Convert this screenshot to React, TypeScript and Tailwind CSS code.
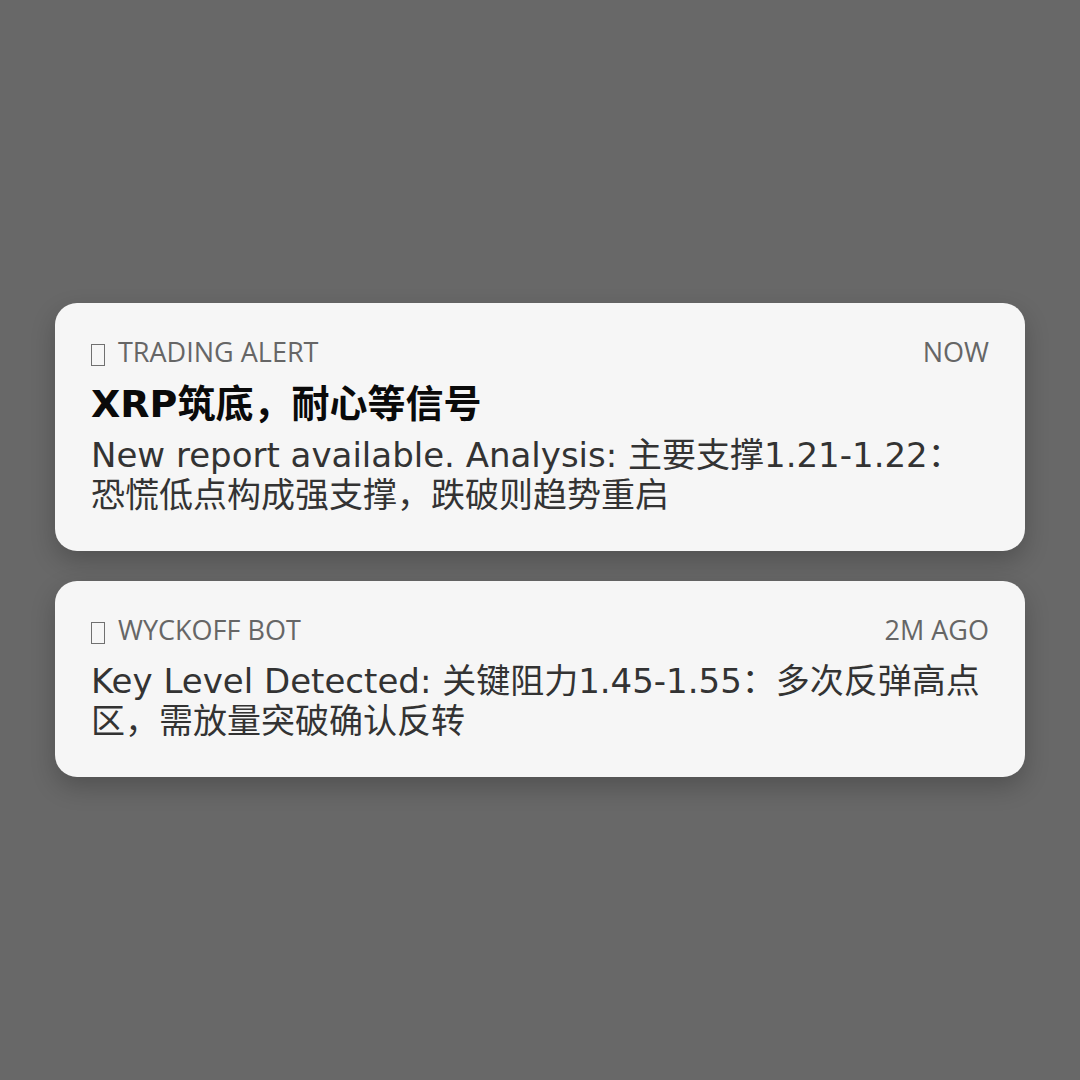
const sans = "font-['DejaVu_Sans','Noto_Sans_CJK_SC',sans-serif]"
const head = "font-['Open_Sans','Noto_Sans_CJK_SC',sans-serif]"

interface Note {
  source: string
  time: string
  title?: string
  body: string
}

const notes: Note[] = [
  {
    source: 'TRADING ALERT',
    time: 'NOW',
    title: 'XRP筑底，耐心等信号',
    body: 'New report available. Analysis: 主要支撑1.21-1.22：恐慌低点构成强支撑，跌破则趋势重启',
  },
  {
    source: 'WYCKOFF BOT',
    time: '2M AGO',
    body: 'Key Level Detected: 关键阻力1.45-1.55：多次反弹高点区，需放量突破确认反转',
  },
]

function Tofu() {
  return (
    <span className="mr-[13px] inline-block h-[22px] w-[14px] translate-y-[4px] border-[1.5px] border-[#707070]" />
  )
}

function NoteCard({ note }: { note: Note }) {
  return (
    <div className="rounded-[22px] bg-[#f6f6f6] px-9 pt-[34px] pb-[36px] shadow-[0_10px_24px_rgba(0,0,0,0.22)]">
      <div className={`flex items-baseline justify-between text-[27px] leading-[30px] text-[#666] ${head}`}>
        <div className="flex items-baseline">
          <Tofu />
          <span>{note.source}</span>
        </div>
        <span>{note.time}</span>
      </div>
      {note.title && (
        <h2 className={`mt-[14px] text-[38px] font-bold leading-[46px] text-[#0a0a0a] ${sans}`}>{note.title}</h2>
      )}
      <p className={`${note.title ? 'mt-[8px]' : 'mt-[16px]'} text-[34px] leading-[40px] text-[#333] ${sans}`}>
        {note.body}
      </p>
    </div>
  )
}

export default function App() {
  return (
    <div className="flex h-[1080px] w-[1080px] flex-col justify-center gap-[30px] bg-[#686868] px-[55px]">
      {notes.map((n) => (
        <NoteCard key={n.source} note={n} />
      ))}
    </div>
  )
}
